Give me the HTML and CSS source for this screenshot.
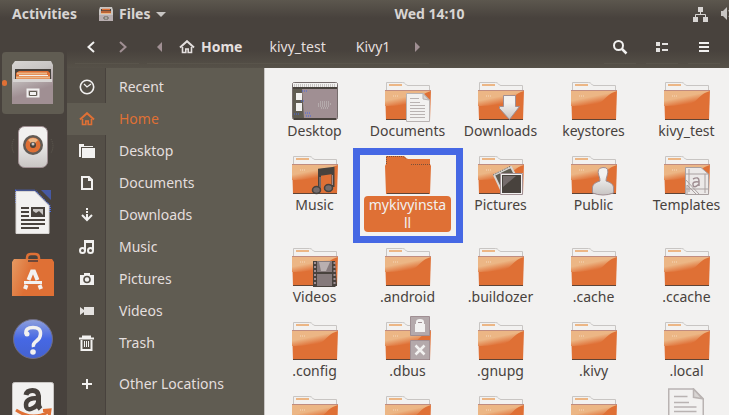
FILE: index.html
```html
<!DOCTYPE html>
<html lang="en">
<head>
<meta charset="utf-8">
<title>Home</title>
<link rel="stylesheet" href="styles.css">
</head>
<body>
<svg class="defs" width="0" height="0" aria-hidden="true">
  <defs>
    <linearGradient id="sheen" x1="0" y1="0" x2="0.6" y2="1">
      <stop offset="0.5" stop-color="#ecb685"/><stop offset="0.85" stop-color="#e0733a"/>
    </linearGradient>
    <linearGradient id="metal" x1="0" y1="0" x2="0.3" y2="1">
      <stop offset="0" stop-color="#d8d5d3"/><stop offset="0.35" stop-color="#c8c5c3"/><stop offset="0.8" stop-color="#a08f93"/>
    </linearGradient>
    <linearGradient id="pale" x1="0" y1="0" x2="0" y2="1">
      <stop offset="0.3" stop-color="#f2f1f0"/><stop offset="1" stop-color="#c8c5c3"/>
    </linearGradient>
    <linearGradient id="blue" x1="0" y1="0" x2="0" y2="1">
      <stop offset="0" stop-color="#8fa0dc"/><stop offset="0.5" stop-color="#4668e4"/><stop offset="1" stop-color="#4462d0"/>
    </linearGradient>
    <linearGradient id="bag" x1="0" y1="0" x2="1" y2="0.3">
      <stop offset="0" stop-color="#e59a63"/><stop offset="0.5" stop-color="#df7035"/>
    </linearGradient>
  </defs>
  <symbol id="folder" viewBox="0 0 46 39">
    <path d="M1.500 9V.5H17.500Q19.500 .5 20.500 2T23 3.500H44.500V9" fill="#f2f1f0" stroke="#c8c5c3"/>
    <path d="M4 3h13" stroke="#ecb685" stroke-width="2"/>
    <path d="M0 8H46L45 38H1Z" fill="#df7035"/>
    <path d="M0 8H46V9C34 12 34 21 24 22S10 24 0 24Z" fill="url(#sheen)"/>
    <path d="M0 8.500H46" stroke="#c08c80"/>
    <path d="M1 37.500H45" stroke="#604435"/>
    <path d="M8 14h6" stroke="#f6d8bb" stroke-dasharray="1 1"/>
  </symbol>
  <symbol id="folder-selected" viewBox="0 0 46 39">
    <path d="M1 38L0 10 1 8V0H18Q20 0 21 2L23 3H45V8L46 10 45 38Z" fill="#df7035"/>
    <path d="M1.500 8V.5H18L21 2.500M26 8.500H45.500" fill="none" stroke="#7a5039" stroke-dasharray="1 1"/>
    <path d="M2 37.500H44" stroke="#604435"/>
  </symbol>
  <symbol id="house" viewBox="0 0 16 14">
    <path d="M1 7.500L8 1.200l7 6.300" fill="none" stroke="currentColor" stroke-width="2"/>
    <path d="M3.500 7v5.500H6.800V9h2.400v3.500h3.300V7" fill="none" stroke="currentColor" stroke-width="1.600"/>
  </symbol>
  <symbol id="page" viewBox="0 0 24 29">
    <path d="M.5 .5H17L23.500 7V28.500H.5Z" fill="#f2f1f0" stroke="#b9b3b2"/>
    <path d="M17 .5V6l6 1Z" fill="#d8d5d3" stroke="#b9b3b2"/>
    <path d="M4 5.500h9M4 9.500h10M4 12.500h15M4 15.500h15M4 18.500h15M4 21.500h15M4 24.500h15" stroke="#b9b3b2"/>
  </symbol>
</svg>

<header class="topbar">
  <button class="activities">Activities</button>
  <button class="app-menu">
    <svg width="14" height="15" viewBox="0 0 14 15"><path d="M1 0H13L14 3V14H0V3Z" fill="#c8c5c3"/><path d="M2 2h10v5H2Z" fill="#48423d"/><path d="M3 2.500h8M2 5h10" stroke="#df7035" stroke-width="1.500"/><path d="M2 6.500h10" stroke="#ecb685"/><path d="M0 8H14V14H0Z" fill="#b8aeb0"/><path d="M5 10h4v2H5Z" fill="#f2f1f0" stroke="#605c52"/></svg>
    <span>Files</span>
    <svg width="10" height="5" viewBox="0 0 10 5"><path d="M0 0H10L5 5Z" fill="#c8c5c3"/></svg>
  </button>
  <time class="clock">Wed 14:10</time>
  <div class="status">
    <svg width="15" height="15" viewBox="0 0 15 15"><path d="M5 0h5v5H5ZM0 10h5v5H0ZM10 10h5v5h-5Z" fill="#d8d5d3"/><path d="M7.500 5V7.500M2.500 10V7.500H12.500V10" fill="none" stroke="#d8d5d3"/></svg>
    <svg width="14" height="14" viewBox="0 0 14 14"><path d="M0 4H2L6 0V13L2 9H0Z" fill="#c8c5c3"/><path d="M8 3Q11 7 8 10" fill="none" stroke="#c8c5c3" stroke-width="2"/></svg>
  </div>
</header>

<div class="desktop">
  <nav class="dock" aria-label="Dock">
    <a class="launcher running" href="#" aria-label="Files">
      <svg width="42" height="44" viewBox="0 0 42 44"><path d="M3 0H39L41 4V43H0V4Z" fill="url(#metal)"/><path d="M3 8H39V20H3Z" fill="#48423d"/><path d="M4 12l3-2H36l2 2V18H4Z" fill="#df7035"/><path d="M5 12.500h30M4 16.500h34" stroke="#ecb685" stroke-width="2"/><path d="M7 14.500h29" stroke="#f2f1f0"/><path d="M1 18H40V21H1Z" fill="#d8d5d3"/><path d="M15.500 28.500h11v7h-11Z" fill="#a08f93" stroke="#f2f1f0" stroke-width="2"/><path d="M17.500 30.500h7v4h-7Z" fill="#f2f1f0" stroke="#605c52"/></svg>
    </a>
    <a class="launcher" href="#" aria-label="Rhythmbox">
      <svg width="44" height="42" viewBox="0 0 44 42"><path d="M3 13q-4 7 0 14M40 13q4 7 0 14" fill="none" stroke="#605c52" stroke-dasharray="1 1"/><rect x="7.500" y=".5" width="29" height="41" rx="6" fill="url(#pale)" stroke="#a08f93"/><circle cx="22" cy="19" r="10" fill="#625b55"/><circle cx="22" cy="19" r="7.500" fill="#df7035"/><path d="M17 14a7 7 0 0 1 10 0l-5 5Z" fill="#ecb685"/><circle cx="22" cy="19" r="3" fill="#48423d"/><circle cx="22" cy="18" r="1.500" fill="#c8c5c3"/></svg>
    </a>
    <a class="launcher" href="#" aria-label="LibreOffice Writer">
      <svg width="36" height="45" viewBox="0 0 36 45"><path d="M1 14V1.500H20L35 17V24" fill="none" stroke="#4668e4" stroke-dasharray="1 1" stroke-width="2"/><path d="M26 1H36V11Z" fill="#4659a4"/><path d="M1 2.500H20L34 16.500V44.500H1Z" fill="#f2f1f0" stroke="#d8d5d3"/><path d="M6 19h8M6 23h8M6 27h8M6 31h24M6 35h24M6 39h18" stroke="#48423d" stroke-width="2"/><path d="M17 19h12v8H17Z" fill="#c8c5c3" stroke="#48423d" stroke-width="2"/><path d="M18 26v-4l3 2 3-2 4 4Z" fill="#48423d"/></svg>
    </a>
    <a class="launcher" href="#" aria-label="Ubuntu Software">
      <svg width="42" height="44" viewBox="0 0 42 44"><path d="M15 7V5q0-4 4-4h4q4 0 4 4v2" fill="none" stroke="#df7035" stroke-width="2.500"/><path d="M2 6H40L42 9V43H0V9Z" fill="url(#bag)"/><path d="M16 8h10" stroke="#704839" stroke-width="2"/><path d="M16.500 27L20 18.500h2L25.500 27M14.500 32l-1.500 4M27.500 32L29 36" fill="none" stroke="#f2f1f0" stroke-width="4"/><path d="M12 29.500H30" stroke="#f2f1f0" stroke-width="3"/></svg>
    </a>
    <a class="launcher" href="#" aria-label="Help">
      <svg width="40" height="40" viewBox="0 0 40 40"><circle cx="20" cy="20" r="19.500" fill="url(#blue)" stroke="#706d80"/><path d="M13 15Q12 8.500 20 8.500T27.500 15Q27.500 19 23.500 22T20.500 28" fill="none" stroke="#f2f1f0" stroke-width="3.500"/><circle cx="14" cy="15" r="2.500" fill="#f2f1f0"/><circle cx="20" cy="33" r="2.800" fill="#f2f1f0"/></svg>
    </a>
    <a class="launcher" href="#" aria-label="Amazon">
      <svg width="42" height="42" viewBox="0 0 42 42"><rect x=".5" y=".5" width="41" height="41" rx="2" fill="#f2f1f0" stroke="#c8c5c3"/><path d="M14 13Q15 8.500 20.500 8.500T26.500 14V22Q26.500 25 28.500 27" fill="none" stroke="#48423d" stroke-width="5"/><path d="M26 16Q14 16 14 22.500T20 26.500T26 20" fill="none" stroke="#48423d" stroke-width="4.500"/><path d="M4 28Q20 39 36 30M31 28.500L38 28l-1 7" fill="none" stroke="#df7035" stroke-width="3"/></svg>
    </a>
  </nav>

  <main class="window">
    <div class="toolbar">
      <button class="tool" aria-label="Back"><svg width="8" height="12" viewBox="0 0 8 12"><path d="M7 1L1.500 6 7 11" fill="none" stroke="#f2f1f0" stroke-width="2"/></svg></button>
      <button class="tool" aria-label="Forward"><svg width="8" height="12" viewBox="0 0 8 12"><path d="M1 1l5.500 5L1 11" fill="none" stroke="#a08f93" stroke-width="2"/></svg></button>
      <div class="path">
        <button class="step" aria-label="Previous folders"><svg width="5" height="10" viewBox="0 0 5 10"><path d="M5 0V10L0 5Z" fill="#a08f93"/></svg></button>
        <button class="crumb current"><svg width="16" height="14"><use href="#house"/></svg>Home</button>
        <button class="crumb">kivy_test</button>
        <button class="crumb">Kivy1</button>
        <button class="step" aria-label="Next folders"><svg width="5" height="10" viewBox="0 0 5 10"><path d="M0 0V10L5 5Z" fill="#a08f93"/></svg></button>
      </div>
      <div class="actions">
        <button class="action" aria-label="Search"><svg width="14" height="14" viewBox="0 0 14 14"><circle cx="5.500" cy="5.500" r="4.500" fill="none" stroke="#f2f1f0" stroke-width="2"/><path d="M9 9l4.500 4.500" stroke="#f2f1f0" stroke-width="2.500"/></svg></button>
        <button class="action" aria-label="View"><svg width="12" height="10" viewBox="0 0 12 10"><path d="M0 0h4v4H0ZM0 6h4v4H0ZM6 1h6v2H6ZM6 7h6v2H6Z" fill="#e4e2e0"/></svg></button>
        <button class="action" aria-label="Menu"><svg width="10" height="10" viewBox="0 0 10 10"><path d="M0 1h10M0 5h10M0 9h10" stroke="#f2f1f0" stroke-width="2"/></svg></button>
      </div>
    </div>

    <div class="panes">
      <nav class="places" aria-label="Places">
        <a class="place" href="#"><span class="glyph"><svg width="16" height="16" viewBox="0 0 16 16"><circle cx="8" cy="8" r="6.700" fill="none" stroke="#f2f1f0" stroke-width="1.600"/><path d="M5 5l3 3 4-3" fill="none" stroke="#f2f1f0" stroke-width="1.300"/></svg></span>Recent</a>
        <a class="place active" href="#"><span class="glyph"><svg width="16" height="14"><use href="#house"/></svg></span>Home</a>
        <a class="place" href="#"><span class="glyph"><svg width="16" height="16" viewBox="0 0 16 16"><path d="M0 1H5V3H14V4H2V14H0ZM3 5H16V15H3Z" fill="#f2f1f0"/></svg></span>Desktop</a>
        <a class="place" href="#"><span class="glyph"><svg width="12" height="14" viewBox="0 0 12 14"><path d="M1 1H8L11 4V13H1Z" fill="none" stroke="#f2f1f0" stroke-width="2"/><path d="M7 1v4h4Z" fill="#f2f1f0"/></svg></span>Documents</a>
        <a class="place" href="#"><span class="glyph"><svg width="12" height="14" viewBox="0 0 12 14"><path d="M6 0V2M6 3V5M6 6V12" stroke="#f2f1f0" stroke-width="2"/><path d="M1 7l5 5 5-5" fill="none" stroke="#f2f1f0" stroke-width="2"/></svg></span>Downloads</a>
        <a class="place" href="#"><span class="glyph"><svg width="16" height="14" viewBox="0 0 16 14"><path d="M6 11V1H14V10M6 2H14" fill="none" stroke="#f2f1f0" stroke-width="2"/><circle cx="3.500" cy="10.500" r="2.500" fill="none" stroke="#f2f1f0" stroke-width="2"/><circle cx="11.500" cy="10.500" r="2.500" fill="none" stroke="#f2f1f0" stroke-width="2"/></svg></span>Music</a>
        <a class="place" href="#"><span class="glyph"><svg width="14" height="12" viewBox="0 0 14 12"><path d="M0 2H4V0H10V2H14V12H0Z" fill="#f2f1f0"/><circle cx="7" cy="6.500" r="3" fill="none" stroke="#544f47" stroke-width="1.600"/></svg></span>Pictures</a>
        <a class="place" href="#"><span class="glyph"><svg width="14" height="10" viewBox="0 0 14 10"><path d="M0 1L4 4V6L0 9ZM4 1H14V9H4Z" fill="#e4e2e0"/></svg></span>Videos</a>
        <a class="place" href="#"><span class="glyph"><svg width="16" height="16" viewBox="0 0 16 16"><path d="M3 1.500H12M0 3.500H15M2.500 5V15H12.500V5" fill="none" stroke="#f2f1f0" stroke-width="2"/><path d="M5.500 6V12M7.500 6V12M9.500 6V12" stroke="#f2f1f0"/></svg></span>Trash</a>
        <a class="place other" href="#"><span class="glyph"><svg width="10" height="10" viewBox="0 0 10 10"><path d="M5 0V10M0 5H10" stroke="#f2f1f0" stroke-width="2"/></svg></span>Other Locations</a>
      </nav>

      <section class="files" aria-label="Home contents">
        <button class="file"><svg width="46" height="39" viewBox="0 0 46 39"><rect x=".5" y=".5" width="45" height="37" rx="2" fill="#a08f93" stroke="#756c6c"/><path d="M1 6H10L12 37H2Q1 37 1 36Z" fill="#605c52"/><path d="M1 1H45V5H1Z" fill="#f2f1f0"/><path d="M2 3.500H44" stroke="#c8c5c3" stroke-dasharray="1 1" stroke-width="3"/><path d="M1 6H45M2 37H44" stroke="#48423d" stroke-width="2"/><path d="M4 11h6v7H4ZM4 21h6v8H4Z" fill="#f2f1f0"/><path d="M10 9h5M9 19h4M2 32h6M13 31h6M14 34h5" stroke="#4668e4" stroke-dasharray="1 1"/><path d="M28 20h9M26 22h13M26 24h12M29 26h7" stroke="#c8c5c3" stroke-dasharray="1 1"/></svg><span class="name">Desktop</span></button>
        <button class="file"><svg width="46" height="39"><use href="#folder" width="46" height="39"/><use href="#page" x="21" y="11" width="24" height="29"/></svg><span class="name">Documents</span></button>
        <button class="file"><svg width="46" height="39"><use href="#folder" width="46" height="39"/><path d="M25.500 13.500H37.500V24.500H41.500L31.500 37.500 21.500 26.500V24.500H25.500Z" fill="url(#pale)" stroke="#a08f93"/></svg><span class="name">Downloads</span></button>
        <button class="file"><svg width="46" height="39"><use href="#folder" width="46" height="39"/></svg><span class="name">keystores</span></button>
        <button class="file"><svg width="46" height="39"><use href="#folder" width="46" height="39"/></svg><span class="name">kivy_test</span></button>

        <button class="file"><svg width="46" height="39"><use href="#folder" width="46" height="39"/><path d="M27.500 34V14L41 12.500V31" fill="none" stroke="#48423d" stroke-width="3"/><path d="M27 15L41 13V18L27 20Z" fill="#48423d"/><path d="M28 32V21M40.500 29V19" stroke="#a08f93"/><ellipse cx="24.500" cy="34" rx="4" ry="3.500" fill="#756c6c" stroke="#48423d" stroke-width="1.500"/><ellipse cx="36.500" cy="32" rx="4" ry="3.500" fill="#756c6c" stroke="#48423d" stroke-width="1.500"/></svg><span class="name">Music</span></button>
        <button class="file selected"><svg width="46" height="39"><use href="#folder-selected" width="46" height="39"/></svg><span class="name">mykivyinsta<wbr>ll</span></button>
        <button class="file"><svg width="46" height="39"><use href="#folder" width="46" height="39"/><path d="M16 19L33 11 42 28 24 36Z" fill="#605c52" stroke="#d8d5d3" stroke-width="2"/><path d="M15 19L33 10" fill="none" stroke="#605c52" stroke-dasharray="1 1"/><path d="M23 18H44V38H23Z" fill="#48423d" stroke="#f2f1f0" stroke-width="2"/><path d="M25 20H38L25 31Z" fill="#756c6c"/><path d="M22.500 17.500H44.500V38.500H22.500Z" fill="none" stroke="#a08f93"/></svg><span class="name">Pictures</span></button>
        <button class="file"><svg width="46" height="39"><use href="#folder" width="46" height="39"/><path d="M28 20Q25 12 32 11.500T36 20Q35 23 35 25Q42 27 42.500 31V37Q32 41 21.500 37V31Q22 27 29 25Q29 22 28 20Z" fill="url(#pale)" stroke="#a08f93"/></svg><span class="name">Public</span></button>
        <button class="file"><svg width="46" height="39"><use href="#folder" width="46" height="39"/><path d="M21.500 11.500H37L44.500 18V38.500H21.500Z" fill="#ece9e8" stroke="#a9a0a0"/><path d="M25 13V36M21 18H44M41 18V37M21 33H44M21 23L35 38M23 38V29L32 38" fill="none" stroke="#a9a0a0"/><path d="M29 23Q35 20 35 25V30M35 26Q28 25 29 29T35 28" fill="none" stroke="#a08f93" stroke-width="1.500"/></svg><span class="name">Templates</span></button>

        <button class="file"><svg width="46" height="39"><use href="#folder" width="46" height="39"/><path d="M21 13H43L45 37 43 39H21Z" fill="#48423d"/><path d="M25 13H40V24H25ZM25 26H40V38H25Z" fill="#857a7b"/><path d="M27 14h11l-4 9h-5Z" fill="#b9b0b0"/><path d="M23 14V38M42.500 14V38" stroke="#a08f93" stroke-width="2" stroke-dasharray="2 2"/></svg><span class="name">Videos</span></button>
        <button class="file"><svg width="46" height="39"><use href="#folder" width="46" height="39"/></svg><span class="name">.android</span></button>
        <button class="file"><svg width="46" height="39"><use href="#folder" width="46" height="39"/></svg><span class="name">.buildozer</span></button>
        <button class="file"><svg width="46" height="39"><use href="#folder" width="46" height="39"/></svg><span class="name">.cache</span></button>
        <button class="file"><svg width="46" height="39"><use href="#folder" width="46" height="39"/></svg><span class="name">.ccache</span></button>

        <button class="file"><svg width="46" height="39"><use href="#folder" width="46" height="39"/></svg><span class="name">.config</span></button>
        <button class="file"><svg width="46" height="39"><use href="#folder" width="46" height="39"/><path d="M25.500 -5.500H44.500V13.500H25.500Z" fill="#b4a9ab" stroke="#a08f93"/><path d="M30 2H40V10H30Z" fill="#f2f1f0"/><path d="M32 2V0q0-2 3-2t3 2V2" fill="#f2f1f0" stroke="#f2f1f0" stroke-width="2"/><path d="M33 .5h4" stroke="#a08f93"/><path d="M25.500 18.500H44.500V37.500H25.500Z" fill="#b4a9ab" stroke="#a08f93"/><path d="M30.500 23.500l9 9M39.500 23.500l-9 9" stroke="#f2f1f0" stroke-width="2.500"/></svg><span class="name">.dbus</span></button>
        <button class="file"><svg width="46" height="39"><use href="#folder" width="46" height="39"/></svg><span class="name">.gnupg</span></button>
        <button class="file"><svg width="46" height="39"><use href="#folder" width="46" height="39"/></svg><span class="name">.kivy</span></button>
        <button class="file"><svg width="46" height="39"><use href="#folder" width="46" height="39"/></svg><span class="name">.local</span></button>

        <button class="file" aria-label="Folder"><svg width="46" height="39"><use href="#folder" width="46" height="39"/></svg></button>
        <button class="file" aria-label="Folder"><svg width="46" height="39"><use href="#folder" width="46" height="39"/></svg></button>
        <button class="file" aria-label="Folder"><svg width="46" height="39"><use href="#folder" width="46" height="39"/></svg></button>
        <button class="file" aria-label="Folder"><svg width="46" height="39"><use href="#folder" width="46" height="39"/></svg></button>
        <button class="file" aria-label="Document"><svg width="46" height="39"><use href="#page" x="4" y="-8" width="36" height="44"/></svg></button>
      </section>
    </div>
  </main>
</div>
</body>
</html>
```
FILE: styles.css
```css
:root {
  --dark: #48423d;
  --olive: #605c52;
  --strip: #544f47;
  --light: #f2f1f0;
  --text: #e4dfde;
  --orange: #df7035;
  --blue: #4668e4;
}

* { box-sizing: border-box; }

body {
  margin: 0;
  height: 100vh;
  overflow: hidden;
  display: flex;
  flex-direction: column;
  background: var(--dark);
  color: var(--text);
  font: 14px/20px "Noto Sans", sans-serif;
}

button {
  margin: 0;
  padding: 0;
  border: 0;
  background: none;
  color: inherit;
  font: inherit;
}

a { color: inherit; text-decoration: none; }

svg { display: block; flex: none; overflow: visible; }

.defs { position: absolute; }

.topbar {
  flex: none;
  display: flex;
  align-items: center;
  height: 28px;
  padding-left: 12px;
  background: linear-gradient(#5c574e, var(--dark) 18px);
  font-weight: 700;
  color: #d8d5d3;
}

.app-menu {
  display: flex;
  align-items: center;
  gap: 6px;
  margin-left: 22px;
}

.clock { margin-left: 228px; }

.status {
  display: flex;
  align-items: center;
  gap: 13px;
  margin-left: auto;
  margin-right: -6px;
}

.desktop { flex: 1; display: flex; min-height: 0; }

.dock {
  flex: none;
  width: 67px;
  padding: 23px 3px 0 2px;
}

.launcher {
  position: relative;
  display: flex;
  align-items: center;
  justify-content: center;
  height: 64px;
}

.running {
  border-radius: 4px;
  border: solid transparent;
  border-width: 1px 0;
  background: #605c52 padding-box;
}

.running::before {
  content: "";
  position: absolute;
  left: 0;
  top: 28px;
  width: 5px;
  height: 6px;
  border-radius: 3px;
  background: var(--orange);
}

.window { flex: 1; display: flex; flex-direction: column; min-width: 0; }

.toolbar {
  flex: none;
  display: flex;
  align-items: stretch;
  height: 40px;
  padding: 2px 9px 4px 8px;
  background: linear-gradient(var(--dark) 22px, #565148);
}

.tool, .action, .step, .crumb {
  display: flex;
  align-items: center;
  justify-content: center;
  border-bottom: 1px solid #59544b;
}

.tool { width: 32px; }

.path { display: flex; margin-left: 8px; }

.step { width: 24px; }

.crumb { padding: 0 15px; gap: 6px; }

.current { padding: 0 12px 0 8px; font-weight: 700; }

.actions { display: flex; gap: 10px; margin-left: auto; }

.action { width: 32px; }

.panes { flex: 1; display: flex; min-height: 0; }

.places {
  flex: none;
  width: 198px;
  padding-top: 3px;
  background: linear-gradient(90deg, var(--strip) 38px, var(--dark) 38px, var(--dark) 39px, var(--olive) 39px);
  border-right: 1px solid #c8c5c3;
}

.place {
  display: flex;
  align-items: center;
  gap: 13px;
  height: 32px;
}

.glyph {
  flex: none;
  display: flex;
  justify-content: center;
  width: 39px;
}

.active { background: var(--olive); color: var(--orange); }

.other { margin-top: 9px; }

.files {
  flex: 1;
  display: grid;
  grid-template-columns: repeat(5, 93px);
  align-content: start;
  align-items: start;
  row-gap: 16px;
  padding: 14px 0 0 3px;
  overflow: hidden;
  background: var(--light);
  color: var(--dark);
}

.file {
  position: relative;
  display: flex;
  flex-direction: column;
  align-items: center;
  gap: 1px;
}

.name {
  max-width: 87px;
  padding: 0 3px;
  border-radius: 4px;
  line-height: 18px;
}

.selected .name { background: var(--orange); color: var(--light); }

.selected::after {
  content: "";
  position: absolute;
  inset: -8px -9px -11px -8px;
  border: 7px solid var(--blue);
}
```
